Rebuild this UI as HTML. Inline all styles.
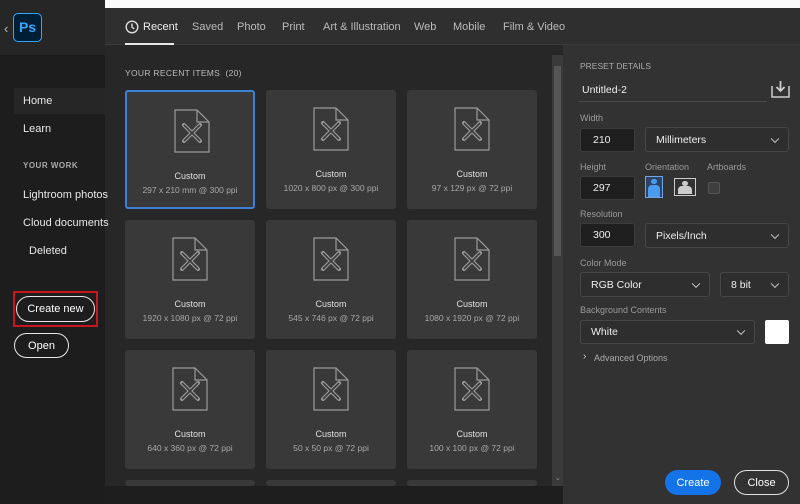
<!DOCTYPE html>
<html><head><style>
*{margin:0;padding:0;box-sizing:border-box}
body{width:800px;height:504px;overflow:hidden;background:#272727;font-family:"Liberation Sans",sans-serif;position:relative;color:#ddd}
.a{position:absolute}
.side{left:0;top:0;width:105px;height:504px;background:#1d1d1d}
.sidetop{left:0;top:0;width:105px;height:55px;background:#262626}
.nav{font-size:11px;color:#e8e8e8;position:absolute;left:23px}
.card{position:absolute;width:130px;height:119px;background:#393939;border-radius:3px}
.card .t{position:absolute;top:79px;width:100%;text-align:center;font-size:9px;color:#e0e0e0}
.card .s{position:absolute;top:93px;width:100%;text-align:center;font-size:8.5px;color:#a8a8a8}
.card svg{position:absolute;left:47px;top:17px}
.lbl{position:absolute;font-size:9px;color:#9a9a9a}
.box{position:absolute;background:#1f1f1f;border:1px solid #3c3c3c;border-radius:3px;font-size:10.5px;color:#eee;padding-left:12px;display:flex;align-items:center}
.dd{position:absolute;border:1px solid #464646;border-radius:3px;background:#2e2e2e;font-size:10.5px;color:#eee;padding-left:10px;display:flex;align-items:center}
.dd i{position:absolute;right:10px;top:50%;width:6px;height:6px;border-right:1.5px solid #ccc;border-bottom:1.5px solid #ccc;transform:translateY(-70%) rotate(45deg)}
.tab{position:absolute;top:21px;font-size:11px;color:#bbb}
.btn{position:absolute;display:flex;align-items:center;justify-content:center;font-size:11px;color:#fff;border-radius:13px}
</style></head><body>
<div class="a side"></div>
<div class="a sidetop"></div>
<div class="a" style="left:4px;top:21px;color:#bbb;font-size:13px">‹</div>
<div class="a" style="left:13px;top:13px;width:29px;height:29px;background:#001e36;border:1.5px solid #31a8ff;border-radius:5px;color:#31a8ff;font-size:14px;font-weight:bold;text-align:center;line-height:26px">Ps</div>
<div class="a" style="left:14px;top:88px;width:91px;height:26px;background:#262626"></div>
<div class="nav" style="top:95px">Home</div>
<div class="nav" style="top:123px">Learn</div>
<div class="nav" style="top:161px;font-size:8px;font-weight:bold;color:#aaa;letter-spacing:.5px">YOUR WORK</div>
<div class="nav" style="top:189px">Lightroom photos</div>
<div class="nav" style="top:217px">Cloud documents</div>
<div class="nav" style="top:245px;left:29px">Deleted</div>
<div class="a" style="left:13px;top:291px;width:85px;height:36px;border:2px solid #c8161e"></div>
<div class="btn" style="left:16px;top:296px;width:79px;height:26px;border:1.5px solid #e8e8e8">Create new</div>
<div class="btn" style="left:14px;top:333px;width:55px;height:25px;border:1.5px solid #e8e8e8">Open</div>

<div class="a" style="left:105px;top:0;width:695px;height:8px;background:#fafafa"></div>
<div class="a" style="left:105px;top:8px;width:695px;height:37px;background:#2f2f2f;border-bottom:1px solid #3a3a3a"></div>
<svg class="a" style="left:125px;top:20px" width="14" height="14" viewBox="0 0 14 14"><circle cx="7" cy="7" r="5.8" fill="none" stroke="#ddd" stroke-width="1.4"/><path d="M7 3.5V7.3L9.3 8.8" fill="none" stroke="#ddd" stroke-width="1.4"/></svg>
<div class="tab" style="left:143px;color:#eee">Recent</div>
<div class="a" style="left:125px;top:43px;width:49px;height:2px;background:#e8e8e8"></div>
<div class="tab" style="left:192px">Saved</div>
<div class="tab" style="left:237px">Photo</div>
<div class="tab" style="left:282px">Print</div>
<div class="tab" style="left:323px">Art &amp; Illustration</div>
<div class="tab" style="left:414px">Web</div>
<div class="tab" style="left:453px">Mobile</div>
<div class="tab" style="left:503px">Film &amp; Video</div>

<div class="a" style="left:125px;top:68px;font-size:8.5px;color:#bbb;letter-spacing:.3px">YOUR RECENT ITEMS &nbsp;(20)</div>

<div class="a" style="left:105px;top:486px;width:458px;height:18px;background:#1e1e1e"></div>
<div class="a" style="left:552px;top:55px;width:11px;height:431px;background:#3a3a3a"></div>
<div class="a" style="left:554px;top:66px;width:7px;height:190px;background:#555"></div>
<div class="a" style="left:555px;top:474px;font-size:7px;color:#999">⌄</div>

<div id="g"></div>
<script>
var d=[["297 x 210 mm @ 300 ppi","1020 x 800 px @ 300 ppi","97 x 129 px @ 72 ppi"],["1920 x 1080 px @ 72 ppi","545 x 746 px @ 72 ppi","1080 x 1920 px @ 72 ppi"],["640 x 360 px @ 72 ppi","50 x 50 px @ 72 ppi","100 x 100 px @ 72 ppi"],["","",""]];
var ic='<svg width="36" height="44" viewBox="0 0 36 44"><path d="M1 1H23L35 13V43H1Z" fill="none" stroke="#9a9a9a" stroke-width="1.2"/><path d="M23 1V13H35" fill="none" stroke="#9a9a9a" stroke-width="1.2"/><path d="M10 16L26 32M26 16L10 32" stroke="#9a9a9a" stroke-width="4" stroke-linecap="round"/><path d="M10 16L26 32M26 16L10 32" stroke="#393939" stroke-width="1.6"/></svg>';
var h='';for(var r=0;r<4;r++)for(var c=0;c<3;c++){var x=125+c*141,y=90+r*130;
h+='<div class="card" style="left:'+x+'px;top:'+y+'px;'+(r==0&&c==0?'border:2px solid #3b82d6;':'')+(r==3?'height:6px;':'')+'">'+(r<3?ic+'<div class="t">Custom</div><div class="s">'+d[r][c]+'</div>':'')+'</div>';}
document.getElementById('g').innerHTML=h;
</script>

<div class="a" style="left:563px;top:45px;width:237px;height:459px;background:#323232"></div>
<div class="lbl" style="left:580px;top:61px;font-size:8.5px;color:#aaa">PRESET DETAILS</div>
<div class="a" style="left:582px;top:84px;font-size:10.5px;color:#eee">Untitled-2</div>
<div class="a" style="left:579px;top:101px;width:188px;height:1px;background:#4a4a4a"></div>
<svg class="a" style="left:771px;top:80px" width="19" height="18" viewBox="0 0 19 18"><path d="M1 6V17H18V6" fill="none" stroke="#ccc" stroke-width="1.5"/><path d="M9.5 1V11M5.5 7L9.5 11L13.5 7" fill="none" stroke="#ccc" stroke-width="1.8"/></svg>
<div class="lbl" style="left:580px;top:113px">Width</div>
<div class="box" style="left:580px;top:128px;width:55px;height:24px">210</div>
<div class="dd" style="left:645px;top:127px;width:144px;height:25px">Millimeters<i></i></div>
<div class="lbl" style="left:580px;top:162px">Height</div>
<div class="lbl" style="left:645px;top:162px">Orientation</div>
<div class="lbl" style="left:707px;top:162px">Artboards</div>
<div class="box" style="left:580px;top:176px;width:55px;height:24px">297</div>
<div class="a" style="left:645px;top:176px;width:18px;height:22px;border:1px solid #6fa6e6;background:#2a4366"></div>
<div class="a" style="left:651px;top:179px;width:6px;height:5px;border-radius:3px;background:#4b9bf0"></div>
<div class="a" style="left:648px;top:185px;width:12px;height:12px;border-radius:4px 4px 0 0;background:#4b9bf0"></div>
<div class="a" style="left:674px;top:178px;width:22px;height:18px;border:1.5px solid #ccc"></div>
<div class="a" style="left:682px;top:181px;width:6px;height:5px;border-radius:3px;background:#ccc"></div>
<div class="a" style="left:678px;top:186px;width:14px;height:8px;border-radius:4px 4px 0 0;background:#ccc"></div>
<div class="a" style="left:708px;top:182px;width:12px;height:12px;border:1px solid #555;background:#3f3f3f;border-radius:2px"></div>
<div class="lbl" style="left:580px;top:209px">Resolution</div>
<div class="box" style="left:580px;top:223px;width:55px;height:24px">300</div>
<div class="dd" style="left:645px;top:223px;width:144px;height:25px">Pixels/Inch<i></i></div>
<div class="lbl" style="left:580px;top:258px">Color Mode</div>
<div class="dd" style="left:580px;top:272px;width:130px;height:25px">RGB Color<i></i></div>
<div class="dd" style="left:720px;top:272px;width:69px;height:25px">8 bit<i></i></div>
<div class="lbl" style="left:580px;top:305px">Background Contents</div>
<div class="dd" style="left:580px;top:320px;width:175px;height:24px">White<i></i></div>
<div class="a" style="left:765px;top:320px;width:24px;height:24px;background:#fff;border-radius:2px"></div>
<div class="a" style="left:583px;top:351px;font-size:10px;color:#ccc">›</div>
<div class="a" style="left:594px;top:353px;font-size:9px;color:#aaa">Advanced Options</div>
<div class="btn" style="left:665px;top:470px;width:56px;height:25px;background:#1473e6">Create</div>
<div class="btn" style="left:734px;top:470px;width:55px;height:25px;border:1.5px solid #e0e0e0">Close</div>
</body></html>
